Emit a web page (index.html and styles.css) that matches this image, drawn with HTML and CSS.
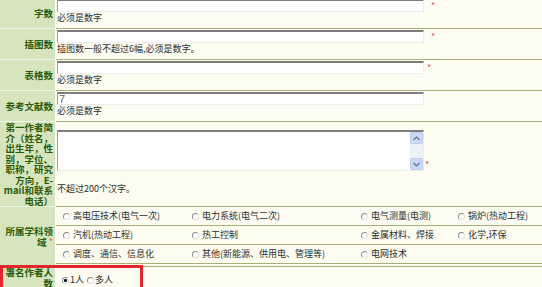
FILE: index.html
```html
<!DOCTYPE html>
<html lang="zh-CN">
<head>
<meta charset="utf-8">
<title>稿件信息</title>
<link rel="stylesheet" href="styles.css">
</head>
<body class="page">
<div class="form">
  <div class="row">
    <div class="label"><span class="label-text">字数</span></div>
    <div class="field">
      <div class="line"><input class="input" type="text"><span class="req">*</span></div>
      <div class="hint">必须是数字</div>
    </div>
  </div>
  <div class="row">
    <div class="label"><span class="label-text">插图数</span></div>
    <div class="field">
      <div class="line"><input class="input" type="text"><span class="req">*</span></div>
      <div class="hint">插图数一般不超过6幅,必须是数字。</div>
    </div>
  </div>
  <div class="row">
    <div class="label"><span class="label-text">表格数</span></div>
    <div class="field">
      <div class="line"><input class="input" type="text"><span class="req req-near">*</span></div>
      <div class="hint">必须是数字</div>
    </div>
  </div>
  <div class="row">
    <div class="label"><span class="label-text">参考文献数</span></div>
    <div class="field">
      <div class="line"><input class="input" type="text" value="7"></div>
      <div class="hint">必须是数字</div>
    </div>
  </div>
  <div class="row">
    <div class="label"><span class="label-text">第一作者简介（姓名，出生年，性别，学位、职称，研究方向，E-mail和联系电话）</span></div>
    <div class="field field-tall">
      <div class="line line-bottom">
        <div class="textbox">
          <textarea class="textarea"></textarea>
          <div class="scrollbar">
            <div class="sb-btn"><svg width="7" height="5" viewBox="0 0 7 5"><polyline points="0.5,4 3.5,1 6.5,4" fill="none" stroke="#5a6f96" stroke-width="1.2"/></svg></div>
            <div class="sb-btn"><svg width="7" height="5" viewBox="0 0 7 5"><polyline points="0.5,1 3.5,4 6.5,1" fill="none" stroke="#5a6f96" stroke-width="1.2"/></svg></div>
          </div>
        </div>
        <span class="req req-low">*</span>
      </div>
      <div class="hint hint-gap">不超过200个汉字。</div>
    </div>
  </div>
  <div class="row">
    <div class="label"><span class="label-text">所属学科领域 <span class="req-inline">*</span></span></div>
    <div class="field field-subjects">
      <div class="subjects">
        <label class="opt"><input class="radio" type="radio" name="subject">高电压技术(电气一次)</label>
        <label class="opt"><input class="radio" type="radio" name="subject">电力系统(电气二次)</label>
        <label class="opt"><input class="radio" type="radio" name="subject">电气测量(电测)</label>
        <label class="opt"><input class="radio" type="radio" name="subject">锅炉(热动工程)</label>
        <label class="opt"><input class="radio" type="radio" name="subject">汽机(热动工程)</label>
        <label class="opt"><input class="radio" type="radio" name="subject">热工控制</label>
        <label class="opt"><input class="radio" type="radio" name="subject">金属材料、焊接</label>
        <label class="opt"><input class="radio" type="radio" name="subject">化学,环保</label>
        <label class="opt"><input class="radio" type="radio" name="subject">调度、通信、信息化</label>
        <label class="opt"><input class="radio" type="radio" name="subject">其他(新能源、供用电、管理等)</label>
        <label class="opt"><input class="radio" type="radio" name="subject">电网技术</label>
        <div class="opt"></div>
      </div>
    </div>
  </div>
  <div class="row">
    <div class="label"><span class="label-text">署名作者人数</span></div>
    <div class="field field-count">
      <label class="choice"><input class="radio" type="radio" name="authors" checked>1人</label>
      <label class="choice"><input class="radio" type="radio" name="authors">多人</label>
    </div>
  </div>
</div>
<div class="highlight"></div>
</body>
</html>
```

FILE: styles.css
```css
.page {
  margin: 0;
  background: #ffffff;
  font-family: "Noto Sans CJK SC", "Noto Sans", sans-serif;
  font-size: 9px;
  color: #333333;
  overflow: hidden;
}

.form {
  margin-top: -2px;
  width: 542px;
  display: flex;
  flex-direction: column;
  background: #ffffff;
}

.row {
  display: flex;
  gap: 1px;
}

.label {
  width: 55px;
  flex: none;
  box-sizing: border-box;
  padding: 0 2px 0 3px;
  background: #d6e5be;
  border-bottom: 1px solid #f1f6e8;
  display: flex;
  align-items: center;
  justify-content: flex-end;
  font-weight: bold;
  font-size: 9.5px;
  line-height: 10.5px;
  color: #2b5a0c;
}

.label-text {
  display: block;
  text-align: right;
}

.req-inline {
  color: #e06464;
  font-weight: normal;
}

.field {
  flex: 1;
  min-width: 0;
  background: #fcfcf0;
  border-bottom: 1px solid #a8b07a;
  padding: 1px 0 4px 1px;
}

.line {
  display: flex;
  align-items: flex-start;
}

.line-bottom {
  align-items: flex-end;
}

.input {
  width: 367px;
  height: 13px;
  box-sizing: border-box;
  margin: 0;
  padding: 0 1px;
  border-style: solid;
  border-width: 2px 1px 1px 1px;
  border-color: #7d7d7d #ececec #ececec #9c9c9c;
  background: #ffffff;
  font-family: "Liberation Sans", sans-serif;
  font-size: 11px;
  line-height: 9px;
  color: #666666;
  outline: none;
}

.req {
  color: #dd5a5a;
  font-size: 9px;
  line-height: 9px;
  margin: 2px 0 0 7px;
}

.req-near {
  margin-left: 3px;
}

.req-low {
  margin: 0 0 2px 1px;
}

.hint {
  font-size: 9px;
  line-height: 12px;
  color: #2e2e2e;
}

.field-tall {
  padding: 8px 0 0 1px;
}

.hint-gap {
  margin-top: 12px;
}

.textbox {
  width: 367px;
  height: 41px;
  box-sizing: border-box;
  display: flex;
  border-style: solid;
  border-width: 2px 1px 1px 1px;
  border-color: #7d7d7d #ececec #ececec #9c9c9c;
  background: #ffffff;
}

.textarea {
  flex: 1;
  border: 0;
  margin: 0;
  padding: 0;
  resize: none;
  outline: none;
  background: transparent;
  overflow: hidden;
}

.scrollbar {
  width: 13px;
  flex: none;
  display: flex;
  flex-direction: column;
  justify-content: space-between;
  background: #edf1fa;
}

.sb-btn {
  height: 12px;
  box-sizing: border-box;
  border: 1px solid #bccdee;
  border-radius: 2px;
  background: #cbdaf4;
  display: flex;
  align-items: center;
  justify-content: center;
}

.field-subjects {
  padding: 0 0 2px 0;
}

.subjects {
  display: grid;
  grid-template-columns: 129px 169px 97px 1fr;
}

.opt {
  height: 18px;
  border-bottom: 1px solid #a8b07a;
  display: flex;
  align-items: center;
  gap: 3px;
  padding-left: 7px;
  font-size: 9px;
  line-height: 12px;
  color: #2e2e2e;
  white-space: nowrap;
}

.radio {
  appearance: none;
  -webkit-appearance: none;
  width: 7px;
  height: 7px;
  flex: none;
  margin: 0;
  box-sizing: border-box;
  border: 1px solid;
  border-color: #8e8e8e #e2e2e2 #e2e2e2 #8e8e8e;
  border-radius: 50%;
  background: #ffffff;
}

.radio:checked {
  background: radial-gradient(circle, #111111 0 1.3px, #ffffff 1.8px);
}

.field-count {
  padding: 7px 0 0 6px;
  display: flex;
  align-items: flex-start;
  gap: 3px;
}

.choice {
  display: flex;
  align-items: center;
  gap: 1px;
  font-size: 9px;
  line-height: 12px;
  color: #2e2e2e;
}

.highlight {
  position: absolute;
  left: 0;
  top: 265px;
  width: 143px;
  height: 30px;
  box-sizing: border-box;
  border: 3px solid #e3262b;
}
```
